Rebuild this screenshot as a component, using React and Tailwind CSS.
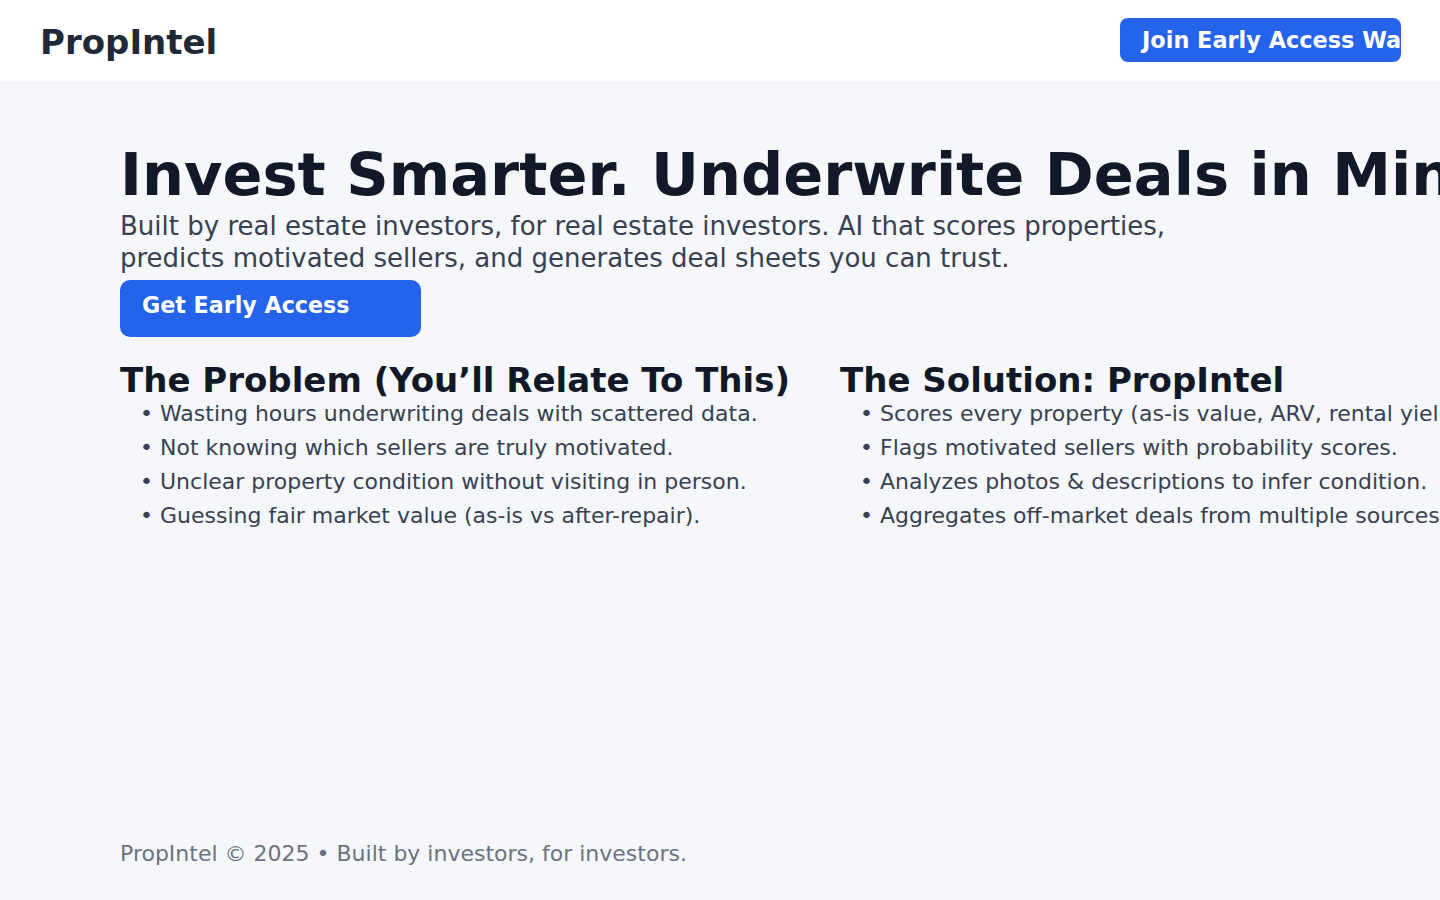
const problems = [
  'Wasting hours underwriting deals with scattered data.',
  'Not knowing which sellers are truly motivated.',
  'Unclear property condition without visiting in person.',
  'Guessing fair market value (as-is vs after-repair).',
]

const solutions = [
  'Scores every property (as-is value, ARV, rental yield, and more).',
  'Flags motivated sellers with probability scores.',
  'Analyzes photos & descriptions to infer condition.',
  'Aggregates off-market deals from multiple sources.',
]

function Column({ title, items }) {
  return (
    <div className="whitespace-nowrap">
      <h2 className="text-[34px] leading-[34px] font-bold text-[#111827]">{title}</h2>
      <ul>
        {items.map(item => (
          <li key={item} className="pl-5 text-[22px] leading-[34px] text-[#374151]">
            • {item}
          </li>
        ))}
      </ul>
    </div>
  )
}

export default function App() {
  return (
    <div
      className="w-[1440px] h-[900px] overflow-hidden flex flex-col bg-[#f5f7fa]"
      style={{ fontFamily: '"DejaVu Sans", sans-serif' }}
    >
      <header className="h-[81px] shrink-0 bg-white pl-10 pr-[39px] flex items-start justify-between">
        <div className="mt-[22px] text-[34px] leading-[40px] font-bold text-[#1f2937]">PropIntel</div>
        <button className="mt-[18px] w-[281px] h-[44px] overflow-hidden whitespace-nowrap rounded-lg bg-[#2563eb] px-[22px] text-left text-[22.4px] leading-[26px] font-bold text-white">
          Join Early Access Waitlist
        </button>
      </header>

      <main className="flex-1 px-[120px] pt-16">
        <h1 className="whitespace-nowrap text-[59px] leading-[60px] font-bold text-[#111827]">
          Invest Smarter. Underwrite Deals in Minutes.
        </h1>
        <p className="mt-[5px] max-w-[1100px] text-[26px] leading-[32px] text-[#374151]">
          Built by real estate investors, for real estate investors. AI that scores properties,
          predicts motivated sellers, and generates deal sheets you can trust.
        </p>
        <button className="mt-[6px] w-[301px] h-[57px] rounded-[10px] bg-[#2563eb] px-[22px] pt-3 text-left text-[22.2px] leading-[26px] font-bold text-white flex items-start">
          Get Early Access
        </button>

        <div className="mt-[26px] grid grid-cols-[720px_720px]">
          <Column title="The Problem (You’ll Relate To This)" items={problems} />
          <Column title="The Solution: PropIntel" items={solutions} />
        </div>
      </main>

      <footer className="px-[120px] pb-[33px] text-[22px] leading-[26px] text-[#6b7280]">
        PropIntel © 2025 • Built by investors, for investors.
      </footer>
    </div>
  )
}
